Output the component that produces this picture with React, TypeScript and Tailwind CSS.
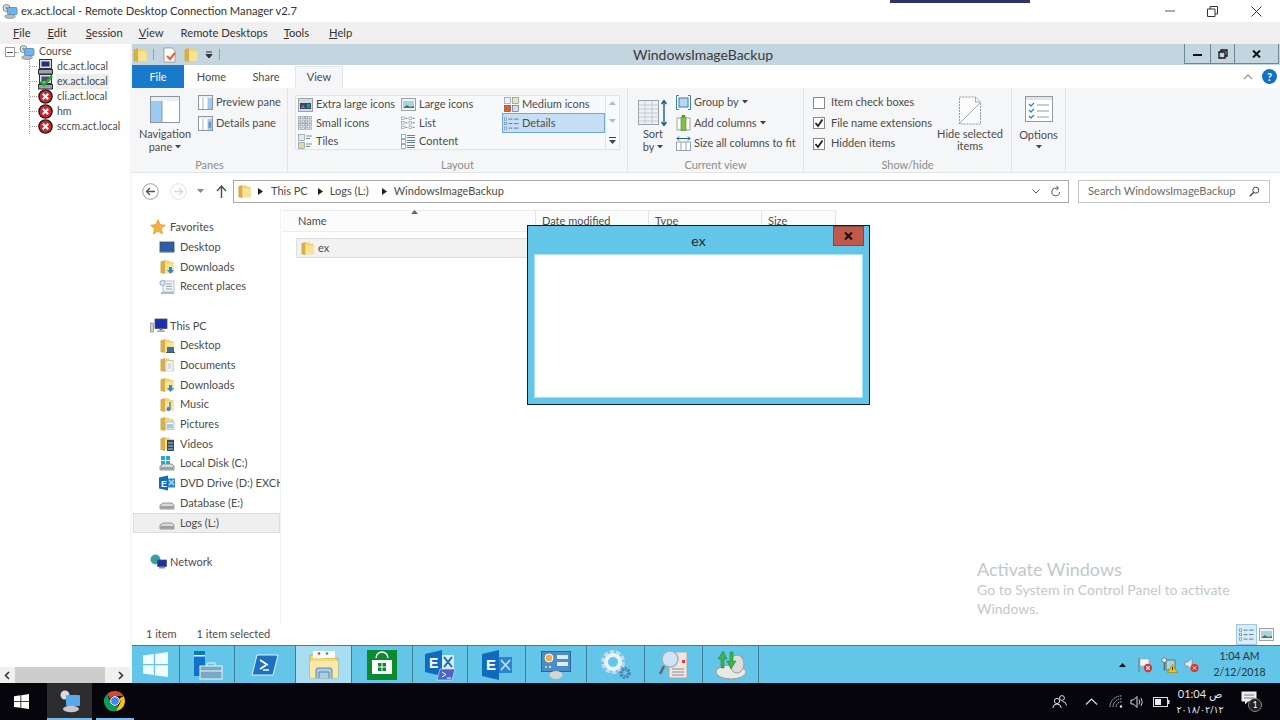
import React from "react";

const FolderIcon = ({ s = 16, badge }: { s?: number; badge?: React.ReactNode }) => (
  <svg width={s} height={s} viewBox="0 0 16 16" className="shrink-0">
    <path d="M1.5 2.5 L6 1 L6 15 L1.5 14 Z" fill="#d6ae4a" />
    <path d="M6 1.5 H10 L11 3 H14.5 V14 H6 Z" fill="#f0d277" />
    <path d="M6 4.5 H14.5 V14 H6 Z" fill="#f8e294" />
    {badge}
  </svg>
);
const ArrowBadge = <path d="M10 8 h3 v3 h2 l-3.5 4 l-3.5 -4 h2 z" fill="#2f86d4" />;
const ScreenBadge = <g><rect x="8" y="9" width="7" height="5" fill="#3b6ea5" /><rect x="7" y="14" width="9" height="1" fill="#555" /></g>;
const DocBadge = <g><rect x="7" y="4" width="7" height="10" fill="#fff" stroke="#aaa" strokeWidth=".5" /><path d="M8.5 7h4M8.5 9h4M8.5 11h4" stroke="#8aa" strokeWidth=".7" /></g>;
const MusicBadge = <g><path d="M11 5v7" stroke="#2f6fb0" strokeWidth="1.2" /><circle cx="9.5" cy="12" r="2" fill="#2f86d4" /></g>;
const PicBadge = <g><rect x="7" y="6" width="8" height="7" fill="#fff" stroke="#7b9ab5" strokeWidth=".6" /><path d="M8 9h6M8 11h6" stroke="#4f93c8" strokeWidth="1" /></g>;
const VidBadge = <g><rect x="8" y="4" width="7" height="11" fill="#3a4a5c" /><path d="M9 7h5M9 10h5M9 13h5" stroke="#9fc4dc" strokeWidth="1" /></g>;

const Drive = ({ win }: { win?: boolean }) => (
  <svg width="16" height="16" viewBox="0 0 16 16" className="shrink-0">
    {win && <g fill="#1fa9e0"><rect x="2" y="0" width="4" height="4" /><rect x="7" y="0" width="4" height="4" /><rect x="2" y="5" width="4" height="4" /><rect x="7" y="5" width="4" height="4" /></g>}
    <path d="M2 10 L3.5 8 H13 L15 10 V14 H1 V10 Z" fill="#d8dadb" stroke="#7f8487" strokeWidth=".8" />
    <rect x="1.5" y="11" width="13" height="2.6" fill="#9a9fa3" />
    <rect x="11.5" y="11.6" width="2" height="1" fill="#5fd05f" />
  </svg>
);
const ExE = ({ s = 16 }: { s?: number }) => (
  <svg width={s} height={s} viewBox="0 0 16 16" className="shrink-0">
    <path d="M0 2.5 L9 0.5 V15.5 L0 13.5 Z" fill="#0f6cbd" />
    <rect x="9" y="3.5" width="7" height="9" fill="#2a86d0" />
    <path d="M10 5l5 5M15 5l-5 5" stroke="#bfe0f5" strokeWidth="1.2" />
    <text x="2" y="11.5" fontSize="9" fontWeight="700" fill="#fff" fontFamily="Liberation Sans">E</text>
  </svg>
);
const Star = () => (
  <svg width="16" height="16" viewBox="0 0 16 16" className="shrink-0">
    <path d="M8 .8 L10.2 5.6 L15.4 6.2 L11.5 9.7 L12.6 14.9 L8 12.3 L3.4 14.9 L4.5 9.7 L.6 6.2 L5.8 5.6 Z" fill="#f3b23e" stroke="#d98f23" strokeWidth=".6" />
  </svg>
);
const DesktopIcon = () => (
  <svg width="16" height="16" viewBox="0 0 16 16" className="shrink-0">
    <rect x="1" y="3" width="14" height="9" fill="#2d5fa8" stroke="#3a4a63" strokeWidth=".8" />
    <rect x="0.5" y="12" width="15" height="1.6" fill="#5c6f88" />
  </svg>
);
const Recent = () => (
  <svg width="16" height="16" viewBox="0 0 16 16" className="shrink-0">
    <rect x="4" y="2" width="11" height="11" fill="#f2f4f6" stroke="#9aa6ae" strokeWidth=".7" />
    <path d="M7 5h6M7 7.5h6M7 10h6" stroke="#7d93a5" strokeWidth=".8" />
    <circle cx="3.5" cy="4" r="2.6" fill="#d7e6f1" stroke="#7a96ab" strokeWidth=".7" />
    <rect x="2" y="13" width="13" height="2" fill="#b5bcc1" />
  </svg>
);
const PcIcon = () => (
  <svg width="18" height="16" viewBox="0 0 18 16" className="shrink-0">
    <rect x="0.5" y="5" width="3" height="9" fill="#c9cfd4" stroke="#667" strokeWidth=".5" />
    <rect x="5" y="1" width="12" height="9.5" fill="#1c2fb0" stroke="#4a4f5a" strokeWidth=".8" />
    <rect x="9.5" y="10.5" width="3" height="2" fill="#777" />
    <rect x="7" y="12.5" width="8" height="1.4" fill="#9aa0a6" />
  </svg>
);
const NetIcon = () => (
  <svg width="18" height="16" viewBox="0 0 18 16" className="shrink-0">
    <circle cx="5.5" cy="5.5" r="5" fill="#35a0b8" />
    <path d="M3 3l3 1 1 3-3 1z" fill="#3ea84d" />
    <rect x="7.5" y="6" width="9" height="6.5" fill="#1c2fb0" stroke="#4a4f5a" strokeWidth=".7" />
    <rect x="9" y="13" width="6" height="1.5" fill="#8a9096" />
  </svg>
);

const RdcIcon = ({ s = 16 }: { s?: number }) => (
  <svg width={s} height={s} viewBox="0 0 16 16" className="shrink-0">
    <circle cx="4.5" cy="5" r="3.5" fill="#dfe3e6" stroke="#5e6870" strokeWidth=".8" />
    <path d="M3 5h3M4.5 3.5v3" stroke="#6c7780" strokeWidth=".7" />
    <rect x="5.5" y="4.5" width="9.5" height="7" rx="1" fill="#6db3ea" stroke="#3e7fb8" strokeWidth=".7" />
    <ellipse cx="8" cy="13.5" rx="5.5" ry="2" fill="#b6bcc2" stroke="#6c7780" strokeWidth=".5" />
  </svg>
);
const PcTree = ({ ok }: { ok?: boolean }) => (
  <svg width="16" height="16" viewBox="0 0 16 16" className="shrink-0">
    <rect x="1.5" y="0.5" width="12" height="9" fill="#d9dde0" stroke="#2e3338" />
    <rect x="3.5" y="2.5" width="8" height="5" fill={ok ? "#49506a" : "#262f78"} />
    <rect x="0.5" y="10.5" width="14" height="4.5" fill="#9ea3a8" stroke="#2e3338" />
    {ok && <path d="M2.5 7.5 L6 11 L14 2" fill="none" stroke="#2aa52e" strokeWidth="2.6" />}
  </svg>
);
const RedX = () => (
  <svg width="15" height="15" viewBox="0 0 15 15" className="shrink-0">
    <circle cx="7.5" cy="7.5" r="6.6" fill="#d8232a" stroke="#1c1c1c" strokeWidth="1.4" />
    <path d="M4.8 4.8 L10.2 10.2 M10.2 4.8 L4.8 10.2" stroke="#fff" strokeWidth="2.2" />
  </svg>
);

const Cells = ({ n = 3, m = 3, c = "#7b8d99" }: { n?: number; m?: number; c?: string }) => (
  <svg width="15" height="15" viewBox="0 0 15 15" className="shrink-0">
    {Array.from({ length: n * m }).map((_, i) => (
      <rect key={i} x={0.5 + (i % n) * (14 / n)} y={0.5 + Math.floor(i / n) * (14 / m)} width={14 / n - 1.2} height={14 / m - 1.2} fill="#e8edf0" stroke={c} strokeWidth=".6" />
    ))}
  </svg>
);
const XlIcon = () => (
  <svg width="15" height="14" viewBox="0 0 15 14" className="shrink-0">
    <rect x=".5" y=".5" width="14" height="13" fill="#d7dcdf" stroke="#9aa3a9" />
    <rect x="2" y="5" width="11" height="6" fill="#2c4c7c" />
    <path d="M3 10l2-3 2 3z" fill="#d2693a" /><rect x="9" y="6" width="3" height="4" fill="#3b9260" />
  </svg>
);
const LargeIcon = () => (
  <svg width="15" height="13" viewBox="0 0 15 13" className="shrink-0">
    <rect x=".5" y=".5" width="14" height="12" fill="#eef2f4" stroke="#9aa3a9" />
    <rect x="2" y="3" width="11" height="7" fill="#a9d4dc" />
    <path d="M2 10l4-3 3 2 4-1v2z" fill="#3d7a6a" />
  </svg>
);
const MediumIcon = () => (
  <svg width="15" height="15" viewBox="0 0 15 15" className="shrink-0">
    <rect x=".5" y=".5" width="6" height="6" fill="#eef" stroke="#889" strokeWidth=".6" />
    <rect x="8.5" y=".5" width="6" height="6" fill="#dbe9cf" stroke="#6b8a52" strokeWidth=".6" />
    <rect x=".5" y="8.5" width="6" height="6" fill="#d9612f" stroke="#7d3a1c" strokeWidth=".6" />
    <rect x="8.5" y="8.5" width="6" height="6" fill="#cfe0ee" stroke="#556" strokeWidth=".6" />
  </svg>
);
const ListIc = () => (
  <svg width="15" height="15" viewBox="0 0 15 15" className="shrink-0">
    {[1, 5.5, 10].map((y) => <g key={y}><rect x=".5" y={y} width="2.6" height="2.6" fill="#fff" stroke="#7b8d99" strokeWidth=".6" /><path d={`M4 ${y + 1.3}h2.5`} stroke="#7b8d99" /><rect x="8" y={y} width="2.6" height="2.6" fill="#fff" stroke="#7b8d99" strokeWidth=".6" /><path d={`M11.5 ${y + 1.3}h2.5`} stroke="#7b8d99" /></g>)}
  </svg>
);
const DetailsIc = () => (
  <svg width="15" height="13" viewBox="0 0 15 13" className="shrink-0">
    {[1, 5.5, 10].map((y) => <g key={y}><rect x=".5" y={y} width="2.2" height="2.2" fill="#fff" stroke="#5f7f99" strokeWidth=".6" /><path d={`M4.5 ${y + 1.1}h4M10 ${y + 1.1}h4.5`} stroke="#5f7f99" /></g>)}
  </svg>
);
const TilesIc = () => (
  <svg width="15" height="15" viewBox="0 0 15 15" className="shrink-0">
    <rect x=".5" y=".5" width="6" height="6" fill="#dfeaf3" stroke="#7b8d99" strokeWidth=".6" />
    <rect x=".5" y="8.5" width="6" height="6" fill="#e5d9a0" stroke="#7b8d99" strokeWidth=".6" />
    <path d="M8 2h6M8 4.5h4M8 10h6M8 12.5h4" stroke="#7b8d99" />
  </svg>
);
const ContentIc = () => (
  <svg width="15" height="15" viewBox="0 0 15 15" className="shrink-0">
    {[0.5, 5.5, 10.5].map((y) => <g key={y}><rect x=".5" y={y} width="4" height="4" fill="#fff" stroke="#5f7f99" strokeWidth=".6" /><path d={`M6 ${y + 1}h8M6 ${y + 3}h8`} stroke="#5f7f99" /></g>)}
  </svg>
);
const PaneIc = ({ details }: { details?: boolean }) => (
  <svg width="15" height="15" viewBox="0 0 15 15" className="shrink-0">
    <rect x=".5" y=".5" width="14" height="14" fill="#fff" stroke="#8d979d" />
    <rect x="1" y="1" width="13" height="2" fill="#eceff1" />
    <path d="M5 3v11" stroke="#8d979d" strokeWidth=".7" />
    <rect x="9.5" y="3" width="4.5" height="11" fill="#9dcbef" />
    {details && <path d="M10.5 7h2.5M10.5 9h2.5M10.5 11h2.5" stroke="#33658f" />}
  </svg>
);

const Caret = () => (
  <svg width="6" height="3.5" viewBox="0 0 7 4" className="inline-block shrink-0"><path d="M0 0h7L3.5 4z" fill="#444" /></svg>
);

const Check = ({ on }: { on?: boolean }) => (
  <span className="flex h-[12px] w-[12px] shrink-0 items-center justify-center border border-[#8a8a8a] bg-white">
    {on && <svg width="10" height="10" viewBox="0 0 10 10"><path d="M1.5 5 L4 8 L8.5 1.5" fill="none" stroke="#222" strokeWidth="1.8" /></svg>}
  </span>
);

const GalleryItem = ({ icon, label, h, sel }: { icon: React.ReactNode; label: string; h: string; sel?: boolean }) => (
  <div className={`flex w-[103px] shrink-0 items-center gap-[3px] ${h} ${sel ? "border border-[#6ea8dc] bg-[#c6dff6] pl-[1px]" : "pl-[2px]"}`}>
    <span className="flex w-[15px] justify-center">{icon}</span>
    <span className="whitespace-nowrap">{label}</span>
  </div>
);

const Group = ({ label, w, children }: { label: string; w: string; children: React.ReactNode }) => (
  <div className={`flex h-full shrink-0 flex-col border-r border-[#e1e4e6] ${w}`}>
    <div className="relative flex min-h-0 flex-1">{children}</div>
    <div className="flex h-[14px] items-center justify-center text-[#8d8d8d]">{label}</div>
  </div>
);

const Tree = ({ icon, label, active }: { icon: React.ReactNode; label: string; active?: boolean }) => (
  <div className="flex h-[15px] items-center">
    <span className="w-[7px] border-t border-dotted border-[#999]" />
    <span className="flex w-[17px] justify-center">{icon}</span>
    <span className={`ml-[2px] px-[1px] leading-[15px] ${active ? "bg-[#eeeeee]" : ""}`}>{label}</span>
  </div>
);

const Nav = ({ icon, label, child, sel }: { icon: React.ReactNode; label: string; child?: boolean; sel?: boolean }) => (
  <div className={`flex h-[19.7px] items-center overflow-hidden whitespace-nowrap ${sel ? "ml-[1px] border border-[#dcdcdc] bg-[#efefef] pl-[25px]" : child ? "pl-[27px]" : "pl-[18px]"}`}>
    <span className={`flex shrink-0 justify-start ${child ? "w-[21px]" : "w-[20px]"}`}>{icon}</span>
    <span>{label}</span>
  </div>
);

const ColHead = ({ label, w }: { label: string; w: string }) => (
  <div className={`flex h-full items-center border-r border-[#e3e3e3] pl-[6px] ${w}`}>{label}</div>
);

const TaskCell = ({ w, active, children }: { w: string; active?: boolean; children: React.ReactNode }) => (
  <div className={`flex h-full shrink-0 items-center justify-center border-r border-[#3d7f97] ${w} ${active ? "bg-[#a8def2]" : ""}`}>{children}</div>
);

const WinLogo = ({ s, c = "#fff" }: { s: number; c?: string }) => (
  <svg width={s} height={s} viewBox="0 0 24 24"><path fill={c} d="M0 3.4 L10.4 2 V11.4 H0 Z M11.6 1.8 L24 0 V11.4 H11.6 Z M0 12.6 H10.4 V22 L0 20.6 Z M11.6 12.6 H24 V24 L11.6 22.2 Z" /></svg>
);

export default function App() {
  return (
    <div className="relative flex h-[720px] w-[1280px] flex-col overflow-hidden bg-white font-['Lato','Noto_Sans','DejaVu_Sans',sans-serif] text-[11px] text-[#4c4c4c]">
      <span className="absolute left-[890px] top-0 h-[3px] w-[140px] bg-[#2a3566]" />
      {/* RDCMan title bar */}
      <div className="flex h-[22px] shrink-0 items-center bg-white pl-[2px]">
        <RdcIcon s={16} />
        <span className="ml-[3px] text-[11.2px] text-[#333]">ex.act.local - Remote Desktop Connection Manager v2.7</span>
        <div className="ml-auto flex items-center pr-[18px]">
          <svg width="10" height="10" viewBox="0 0 10 10" className="mr-[32px]"><path d="M0 5h10" stroke="#555" /></svg>
          <svg width="11" height="11" viewBox="0 0 11 11" className="mr-[33px]"><path d="M.5 3h7.5v7.5H.5z M3 3V.5h7.5V8H8" fill="none" stroke="#333" /></svg>
          <svg width="11" height="11" viewBox="0 0 11 11"><path d="M.5.5l10 10M10.5.5l-10 10" stroke="#333" /></svg>
        </div>
      </div>
      {/* Menu */}
      <div className="flex h-[22px] shrink-0 items-center bg-[#f0f0f0] text-[11.2px] text-[#333]">
        <span className="ml-[13px]"><u>F</u>ile</span>
        <span className="ml-[17px]"><u>E</u>dit</span>
        <span className="ml-[19px]"><u>S</u>ession</span>
        <span className="ml-[16px]"><u>V</u>iew</span>
        <span className="ml-[17px]">Remote Desktops</span>
        <span className="ml-[16px]"><u>T</u>ools</span>
        <span className="ml-[20px]"><u>H</u>elp</span>
      </div>

      <div className="flex min-h-0 flex-1">
        {/* Tree */}
        <aside className="flex w-[132px] shrink-0 flex-col border-r-2 border-[#f6f6f6] text-[10.5px]">
          <div className="min-h-0 flex-1 pt-[1px]">
            <div className="flex h-[15px] items-center pb-[1px] pl-[5px]">
              <span className="flex h-[10px] w-[10px] items-center justify-center border border-[#999]"><span className="h-px w-[6px] bg-[#555]" /></span>
              <span className="w-[4px] border-t border-dotted border-[#999]" />
              <RdcIcon s={16} />
              <span className="ml-[4px]">Course</span>
            </div>
            <div className="ml-[29px] mt-[-1px] w-[100px] border-l border-dotted border-[#999]">
              <Tree icon={<PcTree />} label="dc.act.local" />
              <Tree icon={<PcTree ok />} label="ex.act.local" active />
              <Tree icon={<RedX />} label="cli.act.local" />
              <Tree icon={<RedX />} label="hm" />
              <Tree icon={<RedX />} label="sccm.act.local" />
            </div>
          </div>
          <div className="flex h-[16px] items-center bg-[#f0f0f0] pl-[4px] pr-[6px]">
            <svg width="6" height="9" viewBox="0 0 6 9"><path d="M5 1L1.5 4.5 5 8" fill="none" stroke="#333" strokeWidth="1.6" /></svg>
            <span className="ml-[5px] h-full w-[90px] bg-[#cdcdcd]" />
            <svg width="6" height="9" viewBox="0 0 6 9" className="ml-auto"><path d="M1 1l3.5 3.5L1 8" fill="none" stroke="#333" strokeWidth="1.6" /></svg>
          </div>
        </aside>

        {/* Remote session */}
        <main className="flex min-w-0 flex-1 flex-col">
          {/* Explorer title */}
          <div className="flex h-[21px] shrink-0 items-center bg-[#c3d5de]">
            <div className="flex w-[90px] items-center">
              <FolderIcon />
              <span className="ml-[5px] h-[11px] w-px bg-[#8fa2ac]" />
              <svg width="16" height="16" viewBox="0 0 16 16" className="ml-[8px]"><path d="M2 1h8l3 3v11H2z" fill="#fff" stroke="#888" strokeWidth=".7" /><path d="M5 9l3 3 5-6" fill="none" stroke="#e0673a" strokeWidth="2.2" /></svg>
              <span className="ml-[5px]"><FolderIcon /></span>
              <svg width="8" height="8" viewBox="0 0 8 8" className="ml-[6px]"><path d="M1 1h6M1 3.5h6L4 7z" stroke="#333" fill="#333" /></svg>
              <span className="ml-[6px] h-[11px] w-px bg-[#8fa2ac]" />
            </div>
            <div className="flex-1 text-center text-[14px] leading-[21px] text-[#3a3a3a]">WindowsImageBackup</div>
            <div className="mr-[1px] flex h-[20px] self-start border-x border-b border-[#6f8792] text-[#111]">
              <span className="flex w-[26px] items-center justify-center border-r border-[#6f8792]"><span className="mt-[3px] h-[2.5px] w-[9px] bg-[#111]" /></span>
              <span className="flex w-[24px] items-center justify-center border-r border-[#6f8792]">
                <svg width="10" height="10" viewBox="0 0 10 10"><path d="M1 3h6v6H1z M3 3V1h6v6H7" fill="none" stroke="#111" strokeWidth="1.3" /></svg>
              </span>
              <span className="flex w-[43px] items-center justify-center">
                <svg width="9" height="8" viewBox="0 0 9 8"><path d="M1 .5l7 7M8 .5l-7 7" stroke="#111" strokeWidth="2" /></svg>
              </span>
            </div>
          </div>
          {/* Tabs */}
          <div className="flex h-[23px] shrink-0 items-end bg-white">
            <div className="flex h-[23px] w-[52px] items-center justify-center bg-[#1979ca] pt-[1px] text-white">File</div>
            <div className="flex h-full w-[55px] items-center justify-center pt-[1px]">Home</div>
            <div className="flex h-full w-[54px] items-center justify-center pt-[1px]">Share</div>
            <div className="ml-[2px] flex h-[22px] w-[48px] items-center justify-center border-x border-t border-[#e3e5e7] bg-[#f5f6f7]">View</div>
            <div className="ml-auto flex h-full items-center pr-[3px]">
              <svg width="10" height="6" viewBox="0 0 10 6" className="mr-[9px]"><path d="M1 5l4-4 4 4" fill="none" stroke="#9a9a9a" strokeWidth="1.4" /></svg>
              <span className="flex h-[15px] w-[15px] items-center justify-center rounded-full bg-[#1272c4] text-[11px] font-bold leading-none text-white">?</span>
            </div>
          </div>
          {/* Ribbon */}
          <div className="flex h-[85px] shrink-0 border-b border-[#e3e5e7] bg-[#f5f6f7]">
            <Group label="Panes" w="w-[156px]">
              <div className="flex w-[66px] flex-col items-center pt-[8px]">
                <svg width="30" height="28" viewBox="0 0 30 28">
                  <rect x=".5" y=".5" width="29" height="26" fill="#fff" stroke="#8d979d" />
                  <rect x="1" y="1" width="28" height="4" fill="#eceff1" />
                  <rect x="1" y="5" width="11" height="21" fill="#9ccbf2" />
                  <path d="M12 5v21" stroke="#8d979d" />
                </svg>
                <span className="mt-[3px] leading-[13px]">Navigation</span>
                <span className="flex items-center gap-[3px] leading-[13px]">pane <Caret /></span>
              </div>
              <div className="flex flex-col gap-[6px] pt-[7px]">
                <div className="flex h-[15px] items-center gap-[3px]"><PaneIc />Preview pane</div>
                <div className="flex h-[15px] items-center gap-[3px]"><PaneIc details />Details pane</div>
              </div>
            </Group>
            <Group label="Layout" w="w-[340px]">
              <div className="ml-[7px] mt-[7px] flex h-[55px] w-[325px] border border-[#e0e4e7] bg-[#f8f9fa]">
                <div className="flex flex-col">
                  <GalleryItem icon={<XlIcon />} label="Extra large icons" h="h-[17px]" />
                  <GalleryItem icon={<Cells n={4} m={4} />} label="Small icons" h="h-[20px]" />
                  <GalleryItem icon={<TilesIc />} label="Tiles" h="h-[17px]" />
                </div>
                <div className="flex flex-col">
                  <GalleryItem icon={<LargeIcon />} label="Large icons" h="h-[17px]" />
                  <GalleryItem icon={<ListIc />} label="List" h="h-[20px]" />
                  <GalleryItem icon={<ContentIc />} label="Content" h="h-[17px]" />
                </div>
                <div className="flex flex-col">
                  <GalleryItem icon={<MediumIcon />} label="Medium icons" h="h-[17px]" />
                  <GalleryItem icon={<DetailsIc />} label="Details" h="h-[20px]" sel />
                </div>
                <div className="flex flex-1 flex-col items-center justify-between border-l border-[#e0e4e7] py-[5px]">
                  <svg width="7" height="4" viewBox="0 0 7 4"><path d="M0 4h7L3.5 0z" fill="#bbb" /></svg>
                  <svg width="7" height="4" viewBox="0 0 7 4"><path d="M0 0h7L3.5 4z" fill="#bbb" /></svg>
                  <svg width="7" height="7" viewBox="0 0 7 7"><path d="M0 0h7v1H0zM0 3h7L3.5 7z" fill="#444" /></svg>
                </div>
              </div>
            </Group>
            <Group label="Current view" w="w-[176px]">
              <div className="flex w-[46px] flex-col items-center pl-[4px] pt-[12px]">
                <svg width="30" height="26" viewBox="0 0 30 26">
                  <rect x=".5" y=".5" width="20" height="24" fill="#eef2f5" stroke="#98a3aa" />
                  <path d="M1 5h19M1 9h19M1 13h19M1 17h19M1 21h19M7 1v23M14 1v23" stroke="#c3ccd2" />
                  <path d="M26 1v24M23.5 4L26 .5 28.5 4M23.5 22L26 25.5 28.5 22" fill="none" stroke="#1d5f8f" strokeWidth="1.4" />
                </svg>
                <span className="mt-[1px] leading-[13px]">Sort</span>
                <span className="flex items-center gap-[3px] leading-[13px]">by <Caret /></span>
              </div>
              <div className="flex flex-col gap-[4.8px] pl-[2px] pt-[6px]">
                <div className="flex h-[16px] items-center gap-[3px]">
                  <svg width="15" height="15" viewBox="0 0 15 15"><rect x="3" y="3" width="9" height="9" fill="#b8d9f0" stroke="#3d7fa8" /><path d="M3 .5H.5v14H3M12 .5h2.5v14H12" fill="none" stroke="#3d7fa8" /></svg>
                  <span>Group by</span><Caret />
                </div>
                <div className="flex h-[16px] items-center gap-[3px]">
                  <svg width="15" height="16" viewBox="0 0 15 16"><rect x="1" y="3" width="13" height="12" fill="#fff" stroke="#98a3aa" /><rect x="5" y="2" width="5" height="13.5" fill="#7dc242" stroke="#4f8f20" strokeWidth=".6" /><rect x="6" y="0" width="3" height="2" fill="#4f8f20" /></svg>
                  <span>Add columns</span><Caret />
                </div>
                <div className="flex h-[16px] items-center gap-[3px]">
                  <svg width="15" height="15" viewBox="0 0 15 15"><rect x=".5" y="6" width="14" height="8.5" fill="#fff" stroke="#98a3aa" /><path d="M5 6v8.5M10 6v8.5" stroke="#98a3aa" /><path d="M1 2.5h13M3 .5L1 2.5 3 4.5M12 .5l2 2-2 2" fill="none" stroke="#1d5f8f" /></svg>
                  <span className="whitespace-nowrap">Size all columns to fit</span>
                </div>
              </div>
            </Group>
            <Group label="Show/hide" w="w-[208px]">
              <div className="flex shrink-0 flex-col gap-[5.5px] whitespace-nowrap pl-[9px] pt-[7px]">
                <div className="flex h-[15px] items-center gap-[6px]"><Check />Item check boxes</div>
                <div className="flex h-[15px] items-center gap-[6px]"><Check on />File name extensions</div>
                <div className="flex h-[15px] items-center gap-[6px]"><Check on />Hidden items</div>
              </div>
              <div className="ml-auto flex w-[76px] flex-col items-center pr-[6px] pt-[8px]">
                <svg width="24" height="29" viewBox="0 0 24 29">
                  <path d="M1.5 1h16l5 5v22h-21z" fill="#fbfbfb" stroke="#8f9aa2" strokeDasharray="2 1" />
                  <path d="M17.5 1v5h5M2 27L22 7" fill="none" stroke="#8f9aa2" strokeWidth=".8" />
                </svg>
                <span className="mt-[3px] whitespace-nowrap leading-[12px]">Hide selected</span>
                <span className="leading-[12px]">items</span>
              </div>
            </Group>
            <Group label="" w="w-[54px]">
              <div className="flex w-full flex-col items-center pt-[8px]">
                <svg width="28" height="26" viewBox="0 0 28 26">
                  <rect x=".5" y=".5" width="27" height="25" fill="#fff" stroke="#8f9aa2" />
                  <rect x="1" y="1" width="26" height="3" fill="#dfe4e8" />
                  <path d="M4 8l2 2 3-3M4 14l2 2 3-3M4 20l2 2 3-3" fill="none" stroke="#2f86c4" strokeWidth="1.3" />
                  <path d="M12 9h12M12 15h12M12 21h12" stroke="#8f9aa2" />
                </svg>
                <span className="mt-[6px] leading-[13px]">Options</span>
                <span className="mt-[4px] flex"><Caret /></span>
              </div>
            </Group>
          </div>
          {/* Address */}
          <div className="flex h-[35px] shrink-0 items-center bg-white pt-[1px]">
            <div className="flex w-[101px] items-center pl-[10px]">
              <svg width="17" height="17" viewBox="0 0 17 17"><circle cx="8.5" cy="8.5" r="7.8" fill="#fff" stroke="#9a9a9a" /><path d="M13 8.5H5M8 5L4.5 8.5 8 12" fill="none" stroke="#555" strokeWidth="1.3" /></svg>
              <svg width="17" height="17" viewBox="0 0 17 17" className="ml-[11px]"><circle cx="8.5" cy="8.5" r="7.8" fill="#fff" stroke="#e2e2e2" /><path d="M4 8.5h8M9 5l3.5 3.5L9 12" fill="none" stroke="#d8d8d8" strokeWidth="1.3" /></svg>
              <svg width="7" height="4" viewBox="0 0 7 4" className="ml-[10px]"><path d="M0 0h7L3.5 4z" fill="#888" /></svg>
              <svg width="11" height="13" viewBox="0 0 11 13" className="ml-[12px]"><path d="M5.5 13V1.5M1 6l4.5-5L10 6" fill="none" stroke="#555" strokeWidth="1.5" /></svg>
            </div>
            <div className="flex h-[23px] w-[836px] items-center border border-[#a9a9a9] pl-[3px]">
              <FolderIcon s={15} />
              <svg width="5" height="7" viewBox="0 0 5 7" className="ml-[6px]"><path d="M0 0l5 3.5L0 7z" fill="#222" /></svg>
              <span className="ml-[8px]">This PC</span>
              <svg width="5" height="7" viewBox="0 0 5 7" className="ml-[10px]"><path d="M0 0l5 3.5L0 7z" fill="#222" /></svg>
              <span className="ml-[7px]">Logs (L:)</span>
              <svg width="5" height="7" viewBox="0 0 5 7" className="ml-[13px]"><path d="M0 0l5 3.5L0 7z" fill="#222" /></svg>
              <span className="ml-[7px]">WindowsImageBackup</span>
              <svg width="8" height="5" viewBox="0 0 8 5" className="ml-auto mr-[11px]"><path d="M.5.5l3.5 3.5L7.5.5" fill="none" stroke="#555" /></svg>
              <svg width="10" height="11" viewBox="0 0 10 11" className="mr-[7px]"><path d="M8.5 6A3.8 3.8 0 1 1 5 2.2H7M5.5 0L7.5 2.2 5.5 4" fill="none" stroke="#555" /></svg>
            </div>
            <div className="ml-[9px] flex h-[23px] w-[192px] items-center border border-[#c4c4c4] pl-[9px] pr-[9px] text-[11.2px] text-[#6d6d6d]">
              <span>Search WindowsImageBackup</span>
              <svg width="11" height="11" viewBox="0 0 11 11" className="ml-auto"><circle cx="6.8" cy="4.2" r="3" fill="none" stroke="#444" /><path d="M4.8 6.3L.8 10.3" stroke="#444" strokeWidth="1.3" /></svg>
            </div>
          </div>
          {/* Content */}
          <div className="flex min-h-0 flex-1">
            <div className="h-full w-[149px] shrink-0 border-r border-[#f4f4f4] pt-[9.6px]">
              <Nav icon={<Star />} label="Favorites" />
              <Nav child icon={<DesktopIcon />} label="Desktop" />
              <Nav child icon={<FolderIcon badge={ArrowBadge} />} label="Downloads" />
              <Nav child icon={<Recent />} label="Recent places" />
              <div className="h-[19.7px]" />
              <Nav icon={<PcIcon />} label="This PC" />
              <Nav child icon={<FolderIcon badge={ScreenBadge} />} label="Desktop" />
              <Nav child icon={<FolderIcon badge={DocBadge} />} label="Documents" />
              <Nav child icon={<FolderIcon badge={ArrowBadge} />} label="Downloads" />
              <Nav child icon={<FolderIcon badge={MusicBadge} />} label="Music" />
              <Nav child icon={<FolderIcon badge={PicBadge} />} label="Pictures" />
              <Nav child icon={<FolderIcon badge={VidBadge} />} label="Videos" />
              <Nav child icon={<Drive win />} label="Local Disk (C:)" />
              <Nav child icon={<ExE />} label="DVD Drive (D:) EXCH" />
              <Nav child icon={<Drive />} label="Database (E:)" />
              <Nav child sel icon={<Drive />} label="Logs (L:)" />
              <div className="h-[19.7px]" />
              <Nav icon={<NetIcon />} label="Network" />
            </div>
            <div className="min-w-0 flex-1 pl-[1px] pt-[2px]">
              <div className="relative flex h-[22px] w-[555px] border-b border-t border-[#ececec] bg-[#fcfcfc] pl-[10px]">
                <ColHead label="Name" w="w-[244px]" />
                <ColHead label="Date modified" w="w-[113px]" />
                <ColHead label="Type" w="w-[113px]" />
                <ColHead label="Size" w="w-[74px]" />
                <svg width="7" height="4" viewBox="0 0 7 4" className="absolute left-[129px] top-[-1px]"><path d="M0 4h7L3.5 0z" fill="#666" /></svg>
              </div>
              <div className="ml-[14px] mt-[6px] flex h-[20px] w-[538px] items-center border border-[#dedede] bg-[#f2f2f2] pl-[3px]">
                <FolderIcon s={15} />
                <span className="ml-[3px]">ex</span>
              </div>
            </div>
          </div>
          {/* Status */}
          <div className="flex h-[20px] shrink-0 items-center bg-white pb-[2px] pl-[14px]">
            <span>1 item</span>
            <span className="ml-[20px]">1 item selected</span>
            <div className="ml-auto mr-[6px] flex h-full items-center gap-[2px]">
              <span className="flex h-[21px] w-[21px] items-center justify-center border border-[#9fc6e4] bg-[#d9ebf9]"><DetailsIc /></span>
              <LargeIcon />
            </div>
          </div>
          {/* Server taskbar */}
          <div className="flex h-[38px] shrink-0 items-center border-t border-[#3d7f97] bg-[#63c6e9]">
            <TaskCell w="w-[48px]"><WinLogo s={25} c="#f2fbff" /></TaskCell>
            <TaskCell w="w-[55px]">
              <svg width="32" height="32" viewBox="0 0 32 32"><rect x="3" y="2" width="11" height="25" fill="#0f74c8" /><rect x="3" y="6" width="11" height="1.5" fill="#e9f6fc" /><rect x="9" y="17" width="22" height="13" fill="#7aa9c4" stroke="#e9f6fc" /><path d="M16 17v-3h8v3" fill="none" stroke="#e9f6fc" /><path d="M9 22h22" stroke="#e9f6fc" /></svg>
            </TaskCell>
            <TaskCell w="w-[61px]">
              <svg width="28" height="24" viewBox="0 0 28 24"><path d="M6 2H27L22 22H1Z" fill="#1e6fc0" stroke="#dff2fb" /><path d="M9 7l7 4.5-7 4.5M12 17h6" fill="none" stroke="#fff" strokeWidth="1.7" /></svg>
            </TaskCell>
            <TaskCell w="w-[56px]" active>
              <svg width="32" height="32" viewBox="0 0 32 32"><path d="M2 6h12l2 3h14v20H2z" fill="#f3d77d" stroke="#b99a45" strokeWidth=".7" /><rect x="5" y="2" width="22" height="7" fill="#fff" /><circle cx="11" cy="4.5" r="1.3" fill="#d33" /><circle cx="19" cy="4.5" r="1.3" fill="#3a3" /><rect x="2" y="12" width="28" height="17" fill="#fbe9a9" /><path d="M8 29V21q0-2 2-2h12q2 0 2 2v8M11 29v-6h10v6" fill="#a9cfe6" stroke="#5e86a3" /></svg>
            </TaskCell>
            <TaskCell w="w-[61px]">
              <svg width="30" height="30" viewBox="0 0 30 30"><rect width="30" height="30" fill="#0b8a2e" /><path d="M9 8a6 6 0 0 1 12 0" fill="none" stroke="#fff" strokeWidth="1.4" /><path d="M5 10H25V24H5z" fill="#fff" /><g fill="#0b8a2e"><rect x="11" y="13" width="3.5" height="3.5" /><rect x="15.5" y="13" width="3.5" height="3.5" /><rect x="11" y="17.5" width="3.5" height="3.5" /><rect x="15.5" y="17.5" width="3.5" height="3.5" /></g></svg>
            </TaskCell>
            <TaskCell w="w-[55px]">
              <svg width="30" height="32" viewBox="0 0 30 32"><path d="M0 5 L17 1 V27 L0 23 Z" fill="#0f6cbd" /><rect x="17" y="6" width="12" height="14" fill="#dcebf5" /><path d="M19 8l8 10M27 8l-8 10" stroke="#0f6cbd" strokeWidth="2" /><text x="4" y="19" fontSize="14" fontWeight="700" fill="#fff" fontFamily="Liberation Sans">E</text><path d="M15 20H30L27 31H12Z" fill="#4c64c8" stroke="#dfe6fb" strokeWidth=".6" /><path d="M17 23l4 2.5-4 2.5M22 29h4" fill="none" stroke="#fff" /></svg>
            </TaskCell>
            <TaskCell w="w-[58px]">
              <svg width="30" height="30" viewBox="0 0 30 30"><path d="M0 4 L17 0 V30 L0 26 Z" fill="#0f6cbd" /><rect x="17" y="7" width="13" height="16" fill="#2a86d0" /><path d="M19 10l9 10M28 10l-9 10" stroke="#bfe0f5" strokeWidth="1.7" /><text x="4" y="20" fontSize="15" fontWeight="700" fill="#fff" fontFamily="Liberation Sans">E</text></svg>
            </TaskCell>
            <TaskCell w="w-[61px]">
              <svg width="30" height="28" viewBox="0 0 30 28"><rect x=".5" y=".5" width="29" height="20" fill="#4a8dc8" stroke="#2e6795" /><circle cx="8" cy="7" r="4" fill="#f7a942" stroke="#fff" /><rect x="16" y="4" width="11" height="4" fill="#dcecf7" /><rect x="16" y="11" width="11" height="4" fill="#dcecf7" /><circle cx="5" cy="16" r="1" fill="#ffe27a" /><circle cx="9" cy="16" r="1" fill="#fff" /><ellipse cx="15" cy="24" rx="6.5" ry="4" fill="#d8d4cb" /></svg>
            </TaskCell>
            <TaskCell w="w-[58px]">
              <svg width="32" height="30" viewBox="0 0 32 30"><circle cx="13" cy="12" r="9" fill="none" stroke="#c4d9ec" strokeWidth="6" strokeDasharray="4 1.6" /><circle cx="13" cy="12" r="7" fill="none" stroke="#e8f2fb" strokeWidth="4" /><circle cx="25" cy="23" r="4" fill="none" stroke="#4a7db0" strokeWidth="3.5" strokeDasharray="2 1" /></svg>
            </TaskCell>
            <TaskCell w="w-[58px]">
              <svg width="30" height="32" viewBox="0 0 30 32"><rect x="10" y="3" width="18" height="26" fill="#efe7df" stroke="#a8a8a8" /><path d="M13 20h12M13 23h12M13 26h12" stroke="#889" /><rect x="23" y="11" width="3" height="3" fill="#d9363e" /><circle cx="11" cy="10" r="8" fill="#cfe4f4" stroke="#9ab3c7" strokeWidth="1.5" /><path d="M5 17l-4 8" stroke="#666" strokeWidth="2.5" /></svg>
            </TaskCell>
            <TaskCell w="w-[56px]">
              <svg width="32" height="32" viewBox="0 0 32 32"><ellipse cx="16" cy="23" rx="15" ry="7" fill="#e8e8e4" stroke="#9a9a94" /><ellipse cx="22" cy="15" rx="7" ry="9" fill="#dcdcd8" stroke="#999" /><path d="M8 2l4 8H9v9H6v-9H3zM16 20l-4-8h3V3h3v9h3z" fill="#39b54a" stroke="#1f7d2c" strokeWidth=".5" /></svg>
            </TaskCell>
            {/* tray */}
            <div className="ml-auto flex h-full items-center pr-[16px]">
              <svg width="7" height="4" viewBox="0 0 7 4" className="mr-[11px]"><path d="M0 4h7L3.5 0z" fill="#111" /></svg>
              <svg width="16" height="16" viewBox="0 0 16 16" className="mr-[8px]"><path d="M2 1v14" stroke="#777" /><path d="M3 2h9v7H3z" fill="#f5f5f5" stroke="#999" strokeWidth=".5" /><circle cx="11" cy="11" r="4.2" fill="#d8362f" /><path d="M9.2 9.2l3.6 3.6M12.8 9.2l-3.6 3.6" stroke="#fff" strokeWidth="1.2" /></svg>
              <svg width="17" height="16" viewBox="0 0 17 16" className="mr-[6px]"><rect x="5" y="3" width="9" height="10" fill="#a9d4dc" stroke="#455" strokeWidth=".7" /><circle cx="3.2" cy="3.2" r="2.4" fill="#eee" stroke="#555" strokeWidth=".7" /><path d="M3.2 5.5v8" stroke="#555" /><path d="M11.5 7.5L16.5 15.5H6.5Z" fill="#f4c20d" stroke="#8a6d00" strokeWidth=".5" /><path d="M11.5 10v3" stroke="#222" /></svg>
              <svg width="15" height="16" viewBox="0 0 15 16" className="mr-[16px]"><path d="M1 5h3l4-4v12l-4-4H1z" fill="#e8e8e8" stroke="#778" strokeWidth=".6" /><circle cx="10.5" cy="11" r="4" fill="#d8362f" /><path d="M9 9.5l3 3M12 9.5l-3 3" stroke="#fff" /></svg>
              <div className="flex w-[49px] flex-col items-center pb-[2px] text-[10.5px] leading-[16px] text-[#1f3340]">
                <span>1:04 AM</span>
                <span>2/12/2018</span>
              </div>
            </div>
          </div>
        </main>
      </div>

      {/* Windows 10 taskbar */}
      <div className="flex h-[37px] shrink-0 items-center bg-[#05050b] text-white">
        <span className="ml-[14px] flex"><WinLogo s={15} /></span>
        <div className="ml-[18px] flex h-full w-[45px] items-center justify-center border-b-2 border-[#76b9ed] bg-[#2d2d30]">
          <svg width="22" height="24" viewBox="0 0 22 24"><circle cx="6" cy="6" r="4.5" fill="#d8dadd" /><rect x="7" y="6" width="14" height="11" rx="1" fill="#57a9ee" /><ellipse cx="12" cy="20" rx="8" ry="3.2" fill="#c3c6ca" /></svg>
        </div>
        <div className="ml-[4px] flex h-full w-[38px] items-center justify-center border-b-2 border-[#76b9ed]">
          <svg width="22" height="22" viewBox="0 0 22 22">
            <path d="M11 1a10 10 0 0 1 8.66 5H11a5 5 0 0 0-4.6 3L3 4A10 10 0 0 1 11 1z" fill="#db4437" />
            <path d="M19.66 6A10 10 0 0 1 11.6 21l3.7-6.4A5 5 0 0 0 15.3 8.5z" fill="#f4c20d" />
            <path d="M3 4a10 10 0 0 0 8.6 17l3.4-6a5 5 0 0 1-7.9-1.5z" fill="#0f9d58" />
            <circle cx="11" cy="11" r="4.4" fill="#4285f4" stroke="#fff" strokeWidth="1" />
          </svg>
        </div>
        <div className="ml-auto flex h-full items-center pr-[17px]">
          <svg width="15" height="15" viewBox="0 0 15 15" className="mr-[18px]"><circle cx="5" cy="7" r="2.6" fill="none" stroke="#ddd" /><path d="M.8 14q.4-4 4.2-4t4.2 4" fill="none" stroke="#ddd" /><circle cx="10" cy="4" r="2.4" fill="none" stroke="#ddd" /><path d="M10.5 7.5q3.7.2 4 4" fill="none" stroke="#ddd" /></svg>
          <svg width="13" height="7" viewBox="0 0 13 7" className="mr-[11px]"><path d="M1 6.5l5.5-5.5L12 6.5" fill="none" stroke="#ddd" strokeWidth="1.2" /></svg>
          <svg width="14" height="13" viewBox="0 0 14 13" className="mr-[7px]"><path d="M1 12A11 11 0 0 1 13 1M4 12A8 8 0 0 1 13 4M7 12a5 5 0 0 1 6-5" fill="none" stroke="#ccc" strokeDasharray="1.5 .8" /><circle cx="12" cy="11.5" r="1.2" fill="#eee" /></svg>
          <svg width="15" height="14" viewBox="0 0 15 14" className="mr-[8px]"><path d="M1 5h2.5L7 1.5v11L3.5 9H1z" fill="none" stroke="#ddd" /><path d="M9 4.5q1.5 2.5 0 5M11 3q2.5 4 0 8" fill="none" stroke="#ccc" /></svg>
          <svg width="17" height="10" viewBox="0 0 17 10" className="mr-[1px]"><rect x=".5" y=".5" width="14" height="9" fill="none" stroke="#ddd" /><rect x="2" y="2" width="6" height="6" fill="#eee" /><rect x="15" y="3" width="1.5" height="4" fill="#ddd" /></svg>
          <div className="mr-[12px] flex w-[58px] flex-col items-center text-[#e6e6e6]">
            <span className="whitespace-nowrap text-[11px] leading-[16px]">01:04 ص</span>
            <span className="whitespace-nowrap font-['DejaVu_Sans',sans-serif] text-[9.5px] leading-[16px]">٢٠١٨/٠٢/١٢</span>
          </div>
          <div className="relative h-[22px] w-[22px]">
            <svg width="16" height="15" viewBox="0 0 16 15"><path d="M.5.5h15v10H7l-3 3v-3H.5z" fill="#eee" /><path d="M3 4h10M3 7h10" stroke="#777" /></svg>
            <span className="absolute bottom-[1px] right-[1px] flex h-[14px] w-[14px] items-center justify-center rounded-full border border-[#888] bg-[#222] text-[9px] text-white">1</span>
          </div>
        </div>
      </div>

      {/* Floating dialog */}
      <div className="absolute left-[527px] top-[225px] flex h-[180px] w-[343px] flex-col border border-[#111c26] bg-[#63c6e9]">
        <div className="relative flex h-[28px] shrink-0 items-center justify-center text-[14px] text-[#1c2a33]">
          ex
          <span className="absolute right-[5px] top-0 flex h-[20px] w-[31px] items-center justify-center border border-[#7f4a44] bg-[#c2574b]">
            <svg width="9" height="8" viewBox="0 0 9 8"><path d="M1 .5l7 7M8 .5l-7 7" stroke="#111" strokeWidth="2" /></svg>
          </span>
        </div>
        <div className="mx-[6px] mb-[6px] flex-1 border border-[#a8e0f4] bg-white" />
      </div>

      {/* Activation watermark */}
      <div className="pointer-events-none absolute left-[977px] top-[558px] w-[270px] text-[#c0c8cd]">
        <div className="text-[18px] leading-[22px]">Activate Windows</div>
        <div className="text-[14px] leading-[19px]">Go to System in Control Panel to activate Windows.</div>
      </div>
    </div>
  );
}
